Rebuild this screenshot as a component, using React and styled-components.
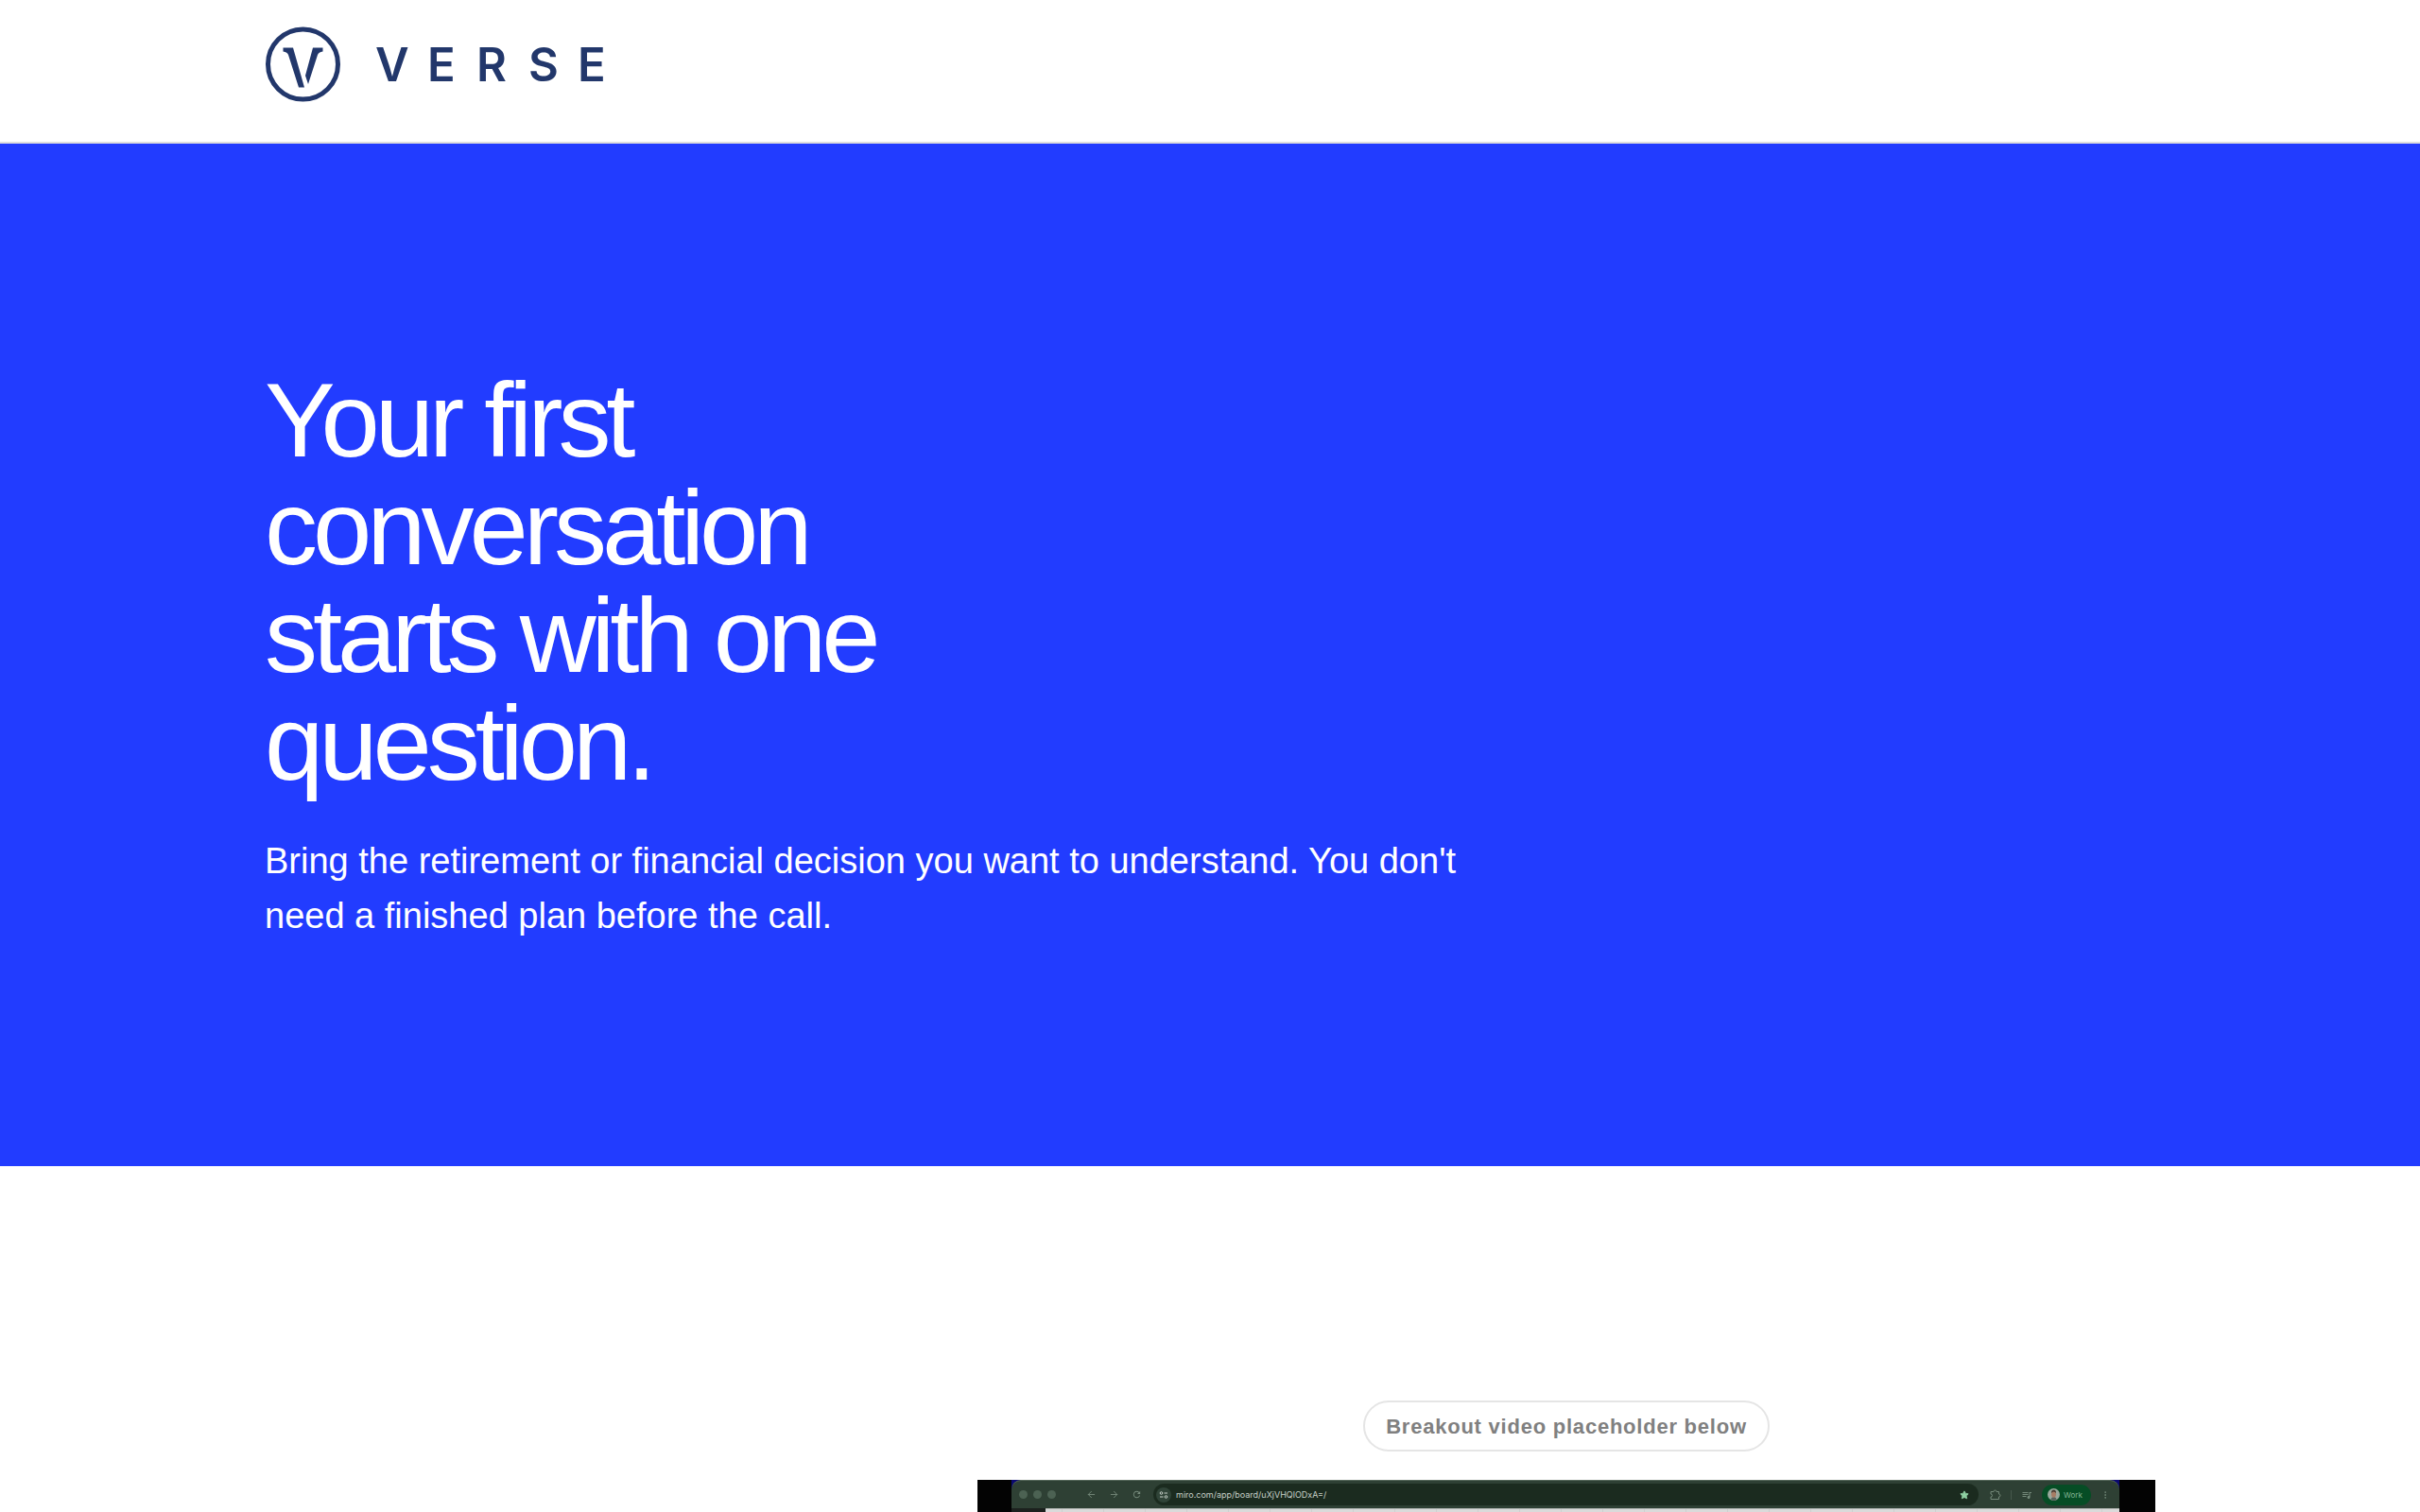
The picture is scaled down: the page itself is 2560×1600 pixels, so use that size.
import styled, { createGlobalStyle } from 'styled-components';
import { ArrowLeft, ArrowRight, Star, EllipsisVertical } from 'lucide-react';
import { MdQueueMusic, MdRefresh } from 'react-icons/md';

const GlobalStyle = createGlobalStyle`
    * {
        box-sizing: border-box;
    }
    body {
        margin: 0;
        background: #fff;
        font-family: "Liberation Sans", Arial, sans-serif;
    }
    h1, p {
        margin: 0;
    }
`;
const Container = styled.div`
    max-width: 2080px;
    margin: 0 auto;
    padding: 0 40px;
`;
const Header = styled.header`
    padding: 28px 0 42px;
    border-bottom: 2px solid #dedede;
`;
const LogoLink = styled.a`
    display: block;
    width: 370px;
    height: 80px;
`;
const Hero = styled.section`
    padding: 236px 0;
    background: #223cff;
    color: #fff;
`;
const Title = styled.h1`
    max-width: 720px;
    font-size: 112px;
    font-weight: 400;
    line-height: 114px;
    letter-spacing: -0.045em;
`;
const Lead = styled.p`
    max-width: 1300px;
    margin-top: 38px;
    font-size: 38px;
    line-height: 58px;
`;
const VideoSection = styled.section`
    height: 366px;
    padding-top: 248px;
    overflow: hidden;
`;
const Columns = styled.div`
    display: grid;
    grid-template-columns: 1fr 62.3%;
`;
const VideoColumn = styled.div`
    grid-column: 2;
    display: flex;
    flex-direction: column;
    align-items: center;
    gap: 30px;
`;
const Pill = styled.p`
    padding: 2px 22px 0;
    border: 2px solid #e5e5e5;
    border-radius: 27px;
    color: #808080;
    font-size: 22px;
    font-weight: 700;
    line-height: 48px;
    letter-spacing: 0.035em;
`;
const Video = styled.div`
    align-self: stretch;
    height: 700px;
    padding: 0 38px 0 36px;
    background: #030303;
`;
const Screen = styled.div`
    height: 100%;
    background: #0a0870;
`;
const Browser = styled.div`
    height: 100%;
    border-top: 1px solid #55675a;
    border-radius: 10px 10px 0 0;
    background: #2e4034;
    overflow: hidden;
    font-family: Inter, sans-serif;
`;
const Toolbar = styled.div`
    display: flex;
    align-items: center;
    height: 29px;
    padding: 0 10px 0 8px;
`;
const Lights = styled.div`
    display: flex;
    gap: 6px;
    margin-right: 32px;
`;
const Light = styled.span`
    width: 9px;
    height: 9px;
    border-radius: 50%;
    background: #4c6253;
`;
const Nav = styled.div`
    display: flex;
    align-items: center;
    gap: 13px;
    margin-right: 12px;
`;
const IconButton = styled.button`
    display: flex;
    padding: 0;
    border: 0;
    background: none;
    color: ${(props) => props.$color || '#74897a'};
`;
const Address = styled.div`
    flex: 1;
    display: flex;
    align-items: center;
    gap: 5px;
    height: 23px;
    padding: 0 10px 0 3px;
    border-radius: 12px;
    background: #1b2b1f;
    color: #c6d0c8;
    font-size: 9px;
    line-height: 12px;
`;
const SiteInfo = styled.span`
    display: flex;
    align-items: center;
    justify-content: center;
    width: 16px;
    height: 16px;
    border-radius: 50%;
    background: #304438;
`;
const Url = styled.span`
    flex: 1;
`;
const Tools = styled.div`
    display: flex;
    align-items: center;
    gap: 10px;
    margin-left: 12px;
`;
const Divider = styled.span`
    width: 1px;
    height: 10px;
    background: #47594c;
`;
const Profile = styled.button`
    display: flex;
    align-items: center;
    gap: 4px;
    width: 52px;
    height: 22px;
    padding: 0 6px;
    border: 0;
    border-radius: 11px;
    background: #064d25;
    color: #83b494;
    font-family: inherit;
    font-size: 8px;
`;
const Board = styled.div`
    height: 670px;
    margin-left: 36px;
    border-top: 1px solid #b4b8b5;
    background: repeating-linear-gradient(90deg, #dadada 0 17px, #cfcfcf 17px 18px, #dadada 18px 44px);
`;
const BoardFrame = styled.div`
    background: #1c211e;
`;

const Logo = () => (
    <svg width="370" height="80" viewBox="280 28 370 80" fill="#22376b" role="img" aria-label="Verse">
        <circle cx="320.5" cy="68" r="37" fill="none" stroke="#22376b" strokeWidth="5" />
        <path d="M299.500 50.5H310L322 92.500H316L305 58Q304 55 299.500 54.500Z" />
        <path d="M331 50.500H341.500V54.500Q337 55 336 58L326 89L323 80Z" />
        <text x="397 452 504 559 611" y="86" fontFamily="Inter, sans-serif" fontWeight="600" fontSize="49">VERSE</text>
    </svg>
);

const SiteIcon = () => (
    <svg width="10" height="10" viewBox="0 0 10 10" fill="none" stroke="#c6d0c8">
        <circle cx="2.500" cy="3" r="1.300" />
        <path d="M5.500 3H9M1 7H4.500" />
        <circle cx="7.500" cy="7" r="1.300" />
    </svg>
);

const ExtensionIcon = () => (
    <svg width="12" height="12" viewBox="0 0 12 12" fill="none" stroke="currentColor">
        <path d="M1 2.500H4A1.500 1.500 0 0 1 7 2.500H9.500V5A1.500 1.500 0 0 1 9.500 8V10.500H1V8A1.500 1.500 0 0 0 1 5Z" />
    </svg>
);

const Avatar = () => (
    <svg width="13" height="13" viewBox="0 0 13 13">
        <circle cx="6.500" cy="6.500" r="6.500" fill="#9aa99d" />
        <path d="M3.500 12Q4 9 6.500 9T9.500 12Q6.500 13.800 3.500 12" fill="#58645d" />
        <ellipse cx="6.500" cy="6" rx="2.500" ry="3.800" fill="#a77d65" />
        <path d="M4 5Q3.800 1.500 6.500 1.500T9 5Q8 3.500 6.500 3.500T4 5" fill="#493b32" />
    </svg>
);

const App = () => {
    return (
        <>
            <GlobalStyle />
            <Header>
                <Container>
                    <LogoLink href="/"><Logo /></LogoLink>
                </Container>
            </Header>
            <Hero>
                <Container>
                    <Title>Your first conversation starts with one question.</Title>
                    <Lead>
                        Bring the retirement or financial decision you want to understand. You don't need a
                        finished plan before the call.
                    </Lead>
                </Container>
            </Hero>
            <VideoSection>
                <Container>
                    <Columns>
                        <VideoColumn>
                            <Pill>Breakout video placeholder below</Pill>
                            <Video>
                                <Screen>
                                    <Browser>
                                        <Toolbar>
                                            <Lights>
                                                <Light />
                                                <Light />
                                                <Light />
                                            </Lights>
                                            <Nav>
                                                <IconButton aria-label="Back"><ArrowLeft size={11} /></IconButton>
                                                <IconButton aria-label="Forward"><ArrowRight size={11} /></IconButton>
                                                <IconButton aria-label="Reload"><MdRefresh size={11} /></IconButton>
                                            </Nav>
                                            <Address>
                                                <SiteInfo><SiteIcon /></SiteInfo>
                                                <Url>miro.com/app/board/uXjVHQlODxA=/</Url>
                                                <IconButton $color="#8fd0a2" aria-label="Bookmark">
                                                    <Star size={10} fill="currentColor" />
                                                </IconButton>
                                            </Address>
                                            <Tools>
                                                <IconButton aria-label="Extensions"><ExtensionIcon /></IconButton>
                                                <Divider />
                                                <IconButton aria-label="Media"><MdQueueMusic size={12} /></IconButton>
                                                <Profile><Avatar />Work</Profile>
                                                <IconButton aria-label="Menu"><EllipsisVertical size={10} /></IconButton>
                                            </Tools>
                                        </Toolbar>
                                        <BoardFrame>
                                            <Board />
                                        </BoardFrame>
                                    </Browser>
                                </Screen>
                            </Video>
                        </VideoColumn>
                    </Columns>
                </Container>
            </VideoSection>
        </>
    );
};
export default App;
